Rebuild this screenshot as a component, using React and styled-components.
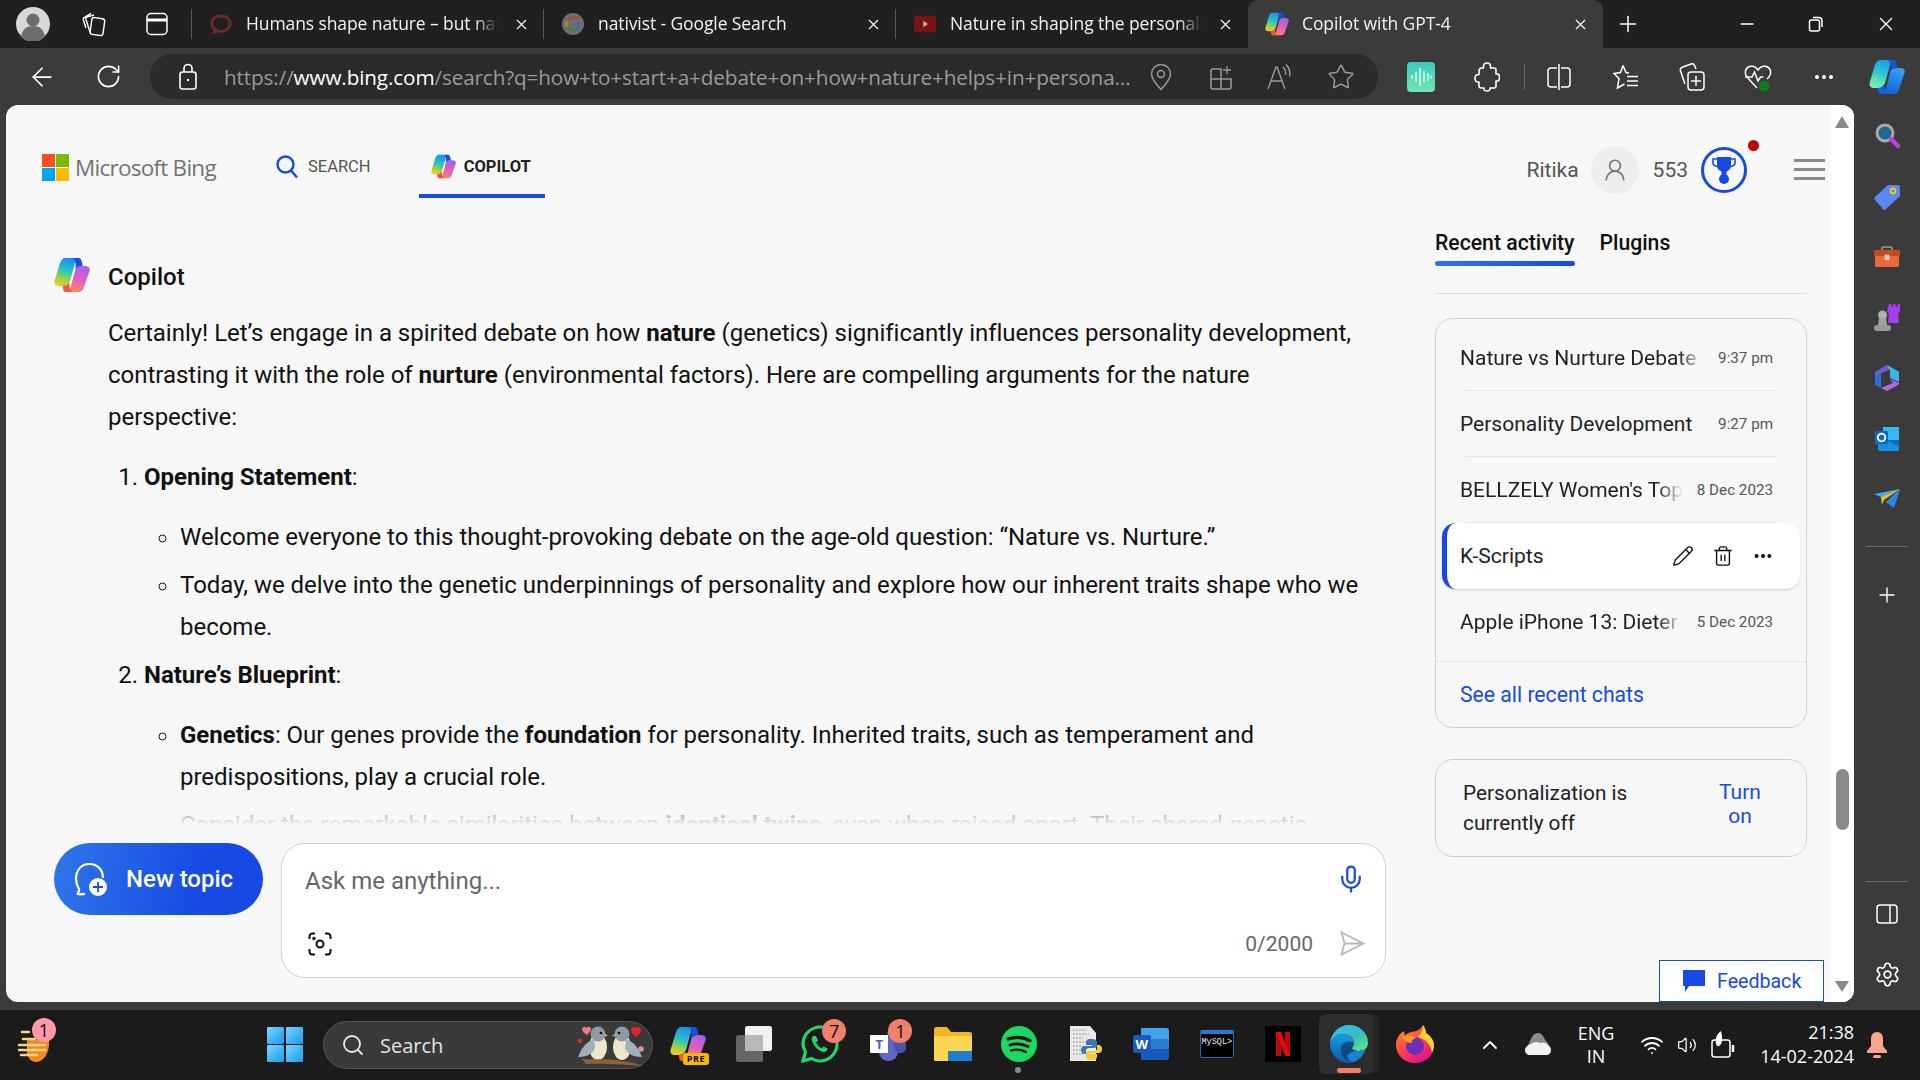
import React from "react";
import styled, { createGlobalStyle } from "styled-components";
import { ArrowLeft, RotateCw, X, Plus, Minus, Star, Ellipsis, Search, UserRound, Pencil, Trash2, Mic, Settings, ChevronUp, Volume2, Wifi } from "lucide-react";

const Global = createGlobalStyle`
  html, body { margin: 0; padding: 0; background: #3b3b3b; overflow: hidden; }
  * { box-sizing: border-box; }
`;

const Shell = styled.div`
  width: 1920px; height: 1080px; display: flex; flex-direction: column; overflow: hidden;
  font-family: "Open Sans", "Noto Sans", sans-serif; background: #3b3b3b;
`;

/* ---------- tab strip ---------- */
const TabBar = styled.div`height: 48px; background: #202020; display: flex; flex: none; color: #fff;`;
const TabTool = styled.div`
  width: ${p => p.$w}px; flex: none; display: flex; align-items: center; justify-content: center;
  ${p => p.$line && "border-right: 1px solid #5a5a5a; margin: 9px 0; height: 30px;"}
`;
const Tab = styled.div`
  width: ${p => p.$w || 352}px; flex: none; height: 48px; display: flex; align-items: center; padding-left: 18px; position: relative;
  background: ${p => p.$active ? "#3b3b3b" : "transparent"};
  border-radius: ${p => p.$active ? "10px 10px 0 0" : "0"};
  ${p => !p.$active && !p.$last && `&::after { content: ""; position: absolute; right: 0; top: 9px; height: 30px; width: 1px; background: #5a5a5a; }`}
`;
const TabIcon = styled.div`width: 22px; height: 24px; flex: none; margin-right: 14px; display: flex; align-items: center; justify-content: center;`;
const TabTitle = styled.div`
  flex: 1; min-width: 0; font-size: 17.5px; letter-spacing: -0.1px; white-space: nowrap; overflow: hidden; color: #f2f2f2; padding-bottom: 2px;
  -webkit-mask-image: linear-gradient(90deg, #000 calc(100% - 24px), transparent);
  mask-image: linear-gradient(90deg, #000 calc(100% - 24px), transparent);
`;
const TabClose = styled.div`width: 46px; flex: none; display: flex; align-items: center; justify-content: center;`;
const WindowButtons = styled.div`display: flex; flex: 1; align-items: center;`;
const WinButton = styled.div`
  width: ${p => p.$w}px; flex: none; display: flex; align-items: center; justify-content: center; height: 48px;
`;

/* ---------- toolbar ---------- */
const Toolbar = styled.div`height: 57px; flex: none; background: #3b3b3b; display: flex; align-items: flex-start; padding: 6px 0 0 12px; color: #fff;`;
const ToolSlot = styled.div`width: ${p => p.$w}px; height: 45px; flex: none; display: flex; align-items: center; justify-content: center;`;
const Address = styled.div`
  width: 1228px; height: 45px; flex: none; margin: 0 10px 0 6px; border-radius: 23px; background: #2b2b2b; display: flex; align-items: center; padding-right: 7px;
`;
const AddressSlot = styled.div`width: ${p => p.$w || 60}px; height: 45px; flex: none; display: flex; align-items: center; justify-content: center;`;
const Url = styled.div`flex: 1; min-width: 0; font-size: 20.7px; margin-left: -2px; white-space: nowrap; overflow: hidden; color: #9a9a9a; letter-spacing: -0.12px;
  b { font-weight: 400; color: #fff; }
`;
const ToolSep = styled.div`width: 1px; height: 26px; background: #6a6a6a; margin: 10px 0 0 4px; flex: none;`;

/* ---------- page ---------- */
const Middle = styled.div`height: 905px; flex: none; display: flex; padding: 0 0 8px 6px;`;
const Page = styled.div`width: 1848px; flex: none; display: flex; background: #f7f7f7; border-radius: 12px; overflow: hidden; font-family: Roboto, sans-serif; color: #111;`;
const Main = styled.div`width: 1824px; flex: none; display: flex; flex-direction: column; position: relative;`;
const Header = styled.header`height: 93px; flex: none; display: flex; align-items: flex-end; padding-left: 36px;`;
const Brand = styled.div`display: flex; align-items: center; gap: 6px; margin-bottom: 15px;`;
const BrandMark = styled.div`display: grid; grid-template-columns: 13px 13px; grid-template-rows: 13px 13px; gap: 1px;`;
const BrandTile = styled.i`display: block; background: ${p => p.$c};`;
const BrandName = styled.div`font-family: "Open Sans", sans-serif; font-size: 22.5px; letter-spacing: -0.75px; color: #737373; font-weight: 500; width: 142px; white-space: nowrap;`;
const NavItem = styled.div`
  align-self: stretch; display: flex; align-items: center; gap: ${p => p.$active ? 8 : 10}px; padding: 34px ${p => p.$active ? 14 : 0}px 0 ${p => p.$active ? 12 : 0}px;
  margin-left: ${p => p.$ml}px; font-size: 16.5px; color: ${p => p.$active ? "#222" : "#555"}; font-weight: ${p => p.$active ? 700 : 400};
  border-bottom: 4px solid ${p => p.$active ? "#174ae4" : "transparent"};
`;
const Account = styled.div`margin-left: auto; display: flex; align-items: center; height: 48px; margin-bottom: 4px; padding-right: 5px; font-size: 21px; color: #555;`;
const Avatar = styled.div`width: 48px; height: 48px; border-radius: 50%; background: #eeeeee; margin: 0 14px 0 12px; display: flex; align-items: center; justify-content: center; color: #777;`;
const Trophy = styled.div`width: 46px; height: 46px; margin: 0 0 0 13px; position: relative;`;
const RedDot = styled.span`position: absolute; right: -12px; top: -7px; width: 11px; height: 11px; border-radius: 50%; background: #c40000;`;
const Burger = styled.div`width: 31px; margin: 0 0 2px 47px; display: flex; flex-direction: column; gap: 6px; i { display: block; height: 3px; background: #8a8a8a; }`;

const Body = styled.div`flex: 1; min-height: 0; display: flex; gap: 49px; padding-left: 48px;`;
const LeftCol = styled.div`width: 1332px; flex: none; display: flex; flex-direction: column;`;
const Chat = styled.div`height: 629px; flex: none; overflow: hidden; position: relative; padding: 60px 0 0;`;
const ChatFade = styled.div`position: absolute; left: 0; right: 0; bottom: 0; height: 42px; background: linear-gradient(rgba(247,247,247,0), #f7f7f7 96%);`;
const ChatHead = styled.div`display: flex; align-items: center; gap: 18px; height: 34px; font-size: 24px; font-weight: 500; span { padding-top: 3px; }`;
const Message = styled.div`
  padding: 20px 20px 0 54px; font-size: 24px; line-height: 42px; letter-spacing: -0.02px; color: #111;
  p { margin: 0 0 18px; }
  ol { margin: 0; padding-left: 36px; }
  ol > li { margin: 0 0 6px; }
  ul { margin: 18px 0 0; padding-left: 36px; list-style: circle; }
  ul > li { margin: 0 0 6px; }
  b { font-weight: 700; }
`;
const InputRow = styled.div`display: flex; gap: 18px; margin-top: 16px; align-items: flex-start;`;
const NewTopic = styled.div`
  width: 209px; height: 72px; flex: none; border-radius: 36px; background: linear-gradient(100deg, #2e77e9, #174ae4 70%);
  display: flex; align-items: center; gap: 18px; padding-left: 20px; color: #fff; font-size: 24px; font-weight: 500;
`;
const InputBox = styled.div`
  flex: 1; height: 135px; background: #fff; border: 1px solid #d2d2d2; border-radius: 24px; display: flex; flex-direction: column; justify-content: space-between; padding: 18px 20px 21px 23px;
`;
const InputLine = styled.div`display: flex; align-items: center; justify-content: space-between; padding-left: ${p => p.$inset || 0}px;`;
const Placeholder = styled.div`font-size: 24px; color: #666; padding-top: 5px;`;
const MicWrap = styled.div`display: flex; margin-right: -1px;`;
const Counter = styled.div`display: flex; align-items: center; gap: 27px; font-size: 21px; color: #666;`;

const RightCol = styled.div`width: 372px; flex: none; display: flex; flex-direction: column;`;
const SideTabs = styled.div`display: flex; gap: 25px; padding: 33px 0 27px; border-bottom: 1px solid #dcdcdc; height: 96px;`;
const SideTab = styled.div`
  height: 35px; font-size: 21.2px; font-weight: 500; line-height: 24px; color: #111; position: relative;
  ${p => p.$active && `&::after { content: ""; position: absolute; left: 0; right: 0; bottom: 0; height: 5px; border-radius: 3px; background: linear-gradient(90deg, #2e77e9, #174ae4); }`}
`;
const Recent = styled.div`margin-top: 24px; height: 410px; border: 1px solid #d2d2d2; border-radius: 18px; padding-top: 6px;`;
const Row = styled.div`
  height: 66px; margin: 0 6px; width: 358px; display: flex; align-items: center; padding: 0 27px 0 18px; position: relative;
  ${p => p.$active && `background: #fff; border-radius: 14px; border-left: 5px solid #174ae4; padding-left: 13px; box-shadow: 0 1px 2px rgba(0,0,0,.18);`}
  ${p => p.$rule && `&::after { content: ""; position: absolute; left: 24px; right: 24px; bottom: 0; height: 1px; background: #e6e6e6; }`}
`;
const RowTitle = styled.div`
  flex: 1; min-width: 0; margin-right: 14px; font-size: 21px; white-space: nowrap; overflow: hidden; color: #222;
  ${p => p.$fade && `-webkit-mask-image: linear-gradient(90deg, #000 calc(100% - 26px), transparent); mask-image: linear-gradient(90deg, #000 calc(100% - 26px), transparent);`}
`;
const RowTime = styled.div`flex: none; font-size: 15.2px; color: #555;`;
const RowActions = styled.div`display: flex; align-items: center; gap: 18px; color: #111; margin-right: -1px;`;
const RecentFoot = styled.div`margin-top: 6px; height: 66px; border-top: 1px solid #e6e6e6; display: flex; align-items: center; padding-left: 24px; font-size: 21.2px; color: #174ae4;`;
const Personal = styled.div`
  margin-top: 31px; height: 98px; border: 1px solid #d2d2d2; border-radius: 18px; display: flex; align-items: center; justify-content: space-between; padding: 0 41px 0 27px;
`;
const PersonalText = styled.div`width: 200px; font-size: 20.8px; line-height: 30px; color: #222;`;
const TurnOn = styled.div`width: 50px; font-size: 21px; line-height: 24px; color: #174ae4; text-align: center; margin-bottom: 8px;`;
const Feedback = styled.div`
  position: absolute; right: 6px; bottom: 0; width: 165px; height: 42px; background: #fff; border: 1px solid #174ae4; border-bottom-width: 1px;
  display: flex; align-items: center; gap: 12px; padding-left: 23px; color: #174ae4; font-size: 19.6px;
`;

const Scroll = styled.div`width: 24px; flex: none; background: #fff; display: flex; flex-direction: column; align-items: center; padding-top: 11px;`;
const ArrowUp = styled.i`display: block; width: 0; height: 0; border-left: 7px solid transparent; border-right: 7px solid transparent; border-bottom: 12px solid #8a8a8a;`;
const ArrowDown = styled.i`display: block; width: 0; height: 0; margin-top: 151px; border-left: 7px solid transparent; border-right: 7px solid transparent; border-top: 11px solid #8a8a8a;`;
const Thumb = styled.i`display: block; width: 13px; height: 61px; margin-top: 641px; border-radius: 7px; background: #8a8a8a;`;

/* ---------- edge sidebar ---------- */
const Sidebar = styled.aside`width: 66px; flex: none; display: flex; flex-direction: column; align-items: center; padding: 1px 0 3px; color: #fff;`;
const SideSlot = styled.div`height: ${p => p.$h || 60.5}px; flex: none; display: flex; align-items: center; justify-content: center; margin-top: ${p => p.$mt || 0}px;`;
const SideRule = styled.div`width: 42px; height: 1px; background: #6a6a6a; margin: ${p => p.$m};`;

/* ---------- taskbar ---------- */
const Taskbar = styled.div`height: 70px; flex: none; background: #1b1b1b; display: flex; align-items: center; padding-left: 12px; color: #fff;`;
const Widget = styled.div`width: 44px; height: 70px; flex: none; position: relative; display: flex; align-items: center; justify-content: center; padding-bottom: 3px;`;
const StartSlot = styled.div`width: 66px; margin-left: 196px; display: flex; justify-content: center; flex: none; padding-bottom: 1px;`;
const StartGrid = styled.div`display: grid; grid-template-columns: 17px 17px; grid-template-rows: 17px 17px; gap: 1.5px;`;
const StartTile = styled.i`display: block; background: linear-gradient(135deg, #7ad7ff, #159af0); border-radius: 1px;`;
const TaskSearch = styled.div`
  width: 330px; height: 48px; margin: 0 2px 0 5px; flex: none; border-radius: 24px; background: #3a3a3a; border: 1px solid #555; display: flex; align-items: center;
  padding-left: 17px; gap: 15px; font-size: 20px; color: #e4e4e4; position: relative;
`;
const Birds = styled.div`margin-left: auto; margin-right: 6px; display: flex; align-items: center;`;
const TaskSlot = styled.div`width: 66.1px; height: 70px; padding-bottom: 3px; flex: none; display: flex; align-items: center; justify-content: center; position: relative;`;
const Badge = styled.span`
  position: absolute; top: ${p => p.$top || 9}px; left: ${p => p.$left}px; width: 24px; height: 24px; border-radius: 50%; background: ${p => p.$c || "#f0806a"};
  color: #111; font: 400 18px/24px "Open Sans", sans-serif; text-align: center;
`;
const TaskDot = styled.i`position: absolute; left: 30px; bottom: 7px; width: 6px; height: 6px; border-radius: 50%; background: #8a8a8a;`;
const ActiveFrame = styled.div`
  position: absolute; left: 3px; right: 8px; top: 4px; bottom: 6px; background: #2d2d2d; border-radius: 7px; box-shadow: 6px 0 0 -1px #262626;
`;
const ActiveBar = styled.i`position: absolute; left: 21px; bottom: 7px; width: 24px; height: 5px; border-radius: 3px; background: #f0806a;`;
const TaskIcon = styled.div`position: relative; display: flex; margin-left: ${p => p.$ml || 0}px;`;
const PreTag = styled.span`
  position: absolute; right: -3px; bottom: -3px; height: 12px; width: 26px; border-radius: 3px; background: #f8b800; color: #111; font: 700 9px/12px "Open Sans", sans-serif; text-align: center; letter-spacing: .6px;
`;
const Tray = styled.div`display: flex; align-items: center; margin-left: 21px; flex: none;`;
const TrayItem = styled.div`width: ${p => p.$w}px; flex: none; display: flex; align-items: center; justify-content: center;`;
const Lang = styled.div`width: 62px; flex: none; text-align: center; font-size: 18px; line-height: 23px;`;
const Clock = styled.div`width: 105px; flex: none; text-align: right; font-size: 18px; line-height: 24px; margin-top: -2px;`;

/* ---------- drawings ---------- */
const CopilotLogo = ({ size = 36, id = "cp", cool }) => (
  <svg width={size} height={size} viewBox="0 0 36 36" style={{ flex: "none" }}>
    <defs>
      <linearGradient id={id + "a"} x1="0.6" y1="0" x2="0.3" y2="1">
        <stop offset="0" stopColor={cool ? "#1b9de8" : "#1c8bf0"} />
        <stop offset=".45" stopColor={cool ? "#2cc4d8" : "#26c3c8"} />
        <stop offset=".72" stopColor={cool ? "#5be0b0" : "#8fd14a"} />
        <stop offset="1" stopColor={cool ? "#7fe8c0" : "#f6c928"} />
      </linearGradient>
      <linearGradient id={id + "b"} x1="0.7" y1="0" x2="0.3" y2="1">
        <stop offset="0" stopColor={cool ? "#3aa0f0" : "#a35ff0"} />
        <stop offset=".5" stopColor={cool ? "#1f83e8" : "#e45fc0"} />
        <stop offset="1" stopColor={cool ? "#1560d8" : "#ff8a50"} />
      </linearGradient>
    </defs>
    <path d="M11 1H25C22 2 21.500 4 20.500 8L16 24C15 27 12 29 9 29H5C2 29 0 27 .5 24L6 6C7 3 9 1 11 1Z" fill={`url(#${id}a)`} />
    <path d="M28 9H31C34.500 9 36.500 11 35.500 14L30 30C29 33.500 27 35 24 35H11C14 34.500 16 32 17 29L21.500 12C22.500 10 25 9 28 9Z" fill={`url(#${id}b)`} />
    <path d="M19 1H25C27 1 28 4 28.500 9C25 9 23 10 21.500 12C22 7 21.500 3 19 1Z" fill={cool ? "#1456c8" : "#1c4fd8"} />
    <path d="M9 29C11 29 14 28 15.500 25C15 30 16 33 19 35H11C9.500 34 8.500 32 9 29Z" fill={cool ? "#1560d8" : "#f0573c"} />
  </svg>
);

const Profile = () => (
  <svg width="34" height="34" viewBox="0 0 34 34"><circle cx="17" cy="17" r="17" fill="#d9d8d4" /><circle cx="17" cy="13" r="6.500" fill="#6d6d6d" /><path d="M5 30c1-8 6-11 12-11s11 3 12 11a17 17 0 0 1-24 0Z" fill="#6d6d6d" /></svg>
);
const Workspaces = () => (
  <svg width="26" height="26" viewBox="0 0 26 26" fill="none" stroke="#fff" strokeWidth="1.400"><rect x="10" y="7" width="13" height="17" rx="2.500" transform="rotate(8 16 15)" /><path d="M9 21 5 8.500C4.600 7 5.400 6 6.600 5.700L13 4M5 17 2.400 9C2 7.600 2.800 6.600 4 6.200L10 2.400" /></svg>
);
const VerticalTabs = () => (
  <svg width="22" height="24" viewBox="0 0 22 24" fill="none" stroke="#fff" strokeWidth="1.500"><rect x="1" y="1.500" width="20" height="21" rx="4" /><path d="M1 8h20" strokeWidth="3" /></svg>
);
const BubbleFav = () => (
  <svg width="24" height="22" viewBox="0 0 24 22" fill="none"><path d="M5 19.500 6.500 17C3.500 15.500 2 13 2 10.500 2 5.500 6.500 2 12 2s10 3.500 10 8.500S17.500 19 12 19c-1.500 0-2.500-.1-3.500-.4Z" stroke="#6e2a2a" strokeWidth="3" /></svg>
);
const GoogleFav = () => (
  <svg width="24" height="24" viewBox="0 0 24 24" fill="none"><circle cx="12" cy="12" r="12" fill="#6f6f6f" /><path d="M17 7.400A7 7 0 0 0 6 8.500" stroke="#a8473e" strokeWidth="2.800" /><path d="M6 8.500a7 7 0 0 0 0 7" stroke="#a78a2e" strokeWidth="2.800" /><path d="M6 15.500a7 7 0 0 0 10.500 1.800" stroke="#3f7c4d" strokeWidth="2.800" /><path d="M16.500 17.300c1.600-1.400 2.400-3.300 2.100-5.300H12" stroke="#4468a8" strokeWidth="2.800" /></svg>
);
const TubeFav = () => (
  <svg width="24" height="24" viewBox="0 0 24 24"><rect x="0" y="3" width="24" height="18" rx="4" fill="#7a1414" /><path d="M10 8.500v7l5.500-3.500Z" fill="#c9a0a0" /></svg>
);
const Lock = () => (
  <svg width="20" height="28" viewBox="0 0 20 28" fill="none" stroke="#fff" strokeWidth="1.600"><rect x="2" y="9" width="16" height="17" rx="2.500" /><path d="M6 9V5.500a4 4 0 0 1 8 0V9" /><circle cx="10" cy="17" r="1.200" fill="#fff" stroke="none" /></svg>
);
const PinIcon = () => (
  <svg width="24" height="28" viewBox="0 0 24 28" fill="none" stroke="#9a9a9a" strokeWidth="1.500"><path d="M12 26.500C6 20 2.500 15.500 2.500 11a9.500 9.500 0 0 1 19 0c0 4.500-3.500 9-9.500 15.500Z" /><circle cx="12" cy="11" r="3.500" /></svg>
);
const AppsIcon = () => (
  <svg width="24" height="26" viewBox="0 0 24 26" fill="none" stroke="#9a9a9a" strokeWidth="1.500"><path d="M2 7a2 2 0 0 1 2-2h8v10H2ZM2 15h10v10H4a2 2 0 0 1-2-2ZM12 15h10v8a2 2 0 0 1-2 2h-8Z" /><path d="M18 2v8M14 6h8" strokeWidth="1.300" /></svg>
);
const ReadIcon = () => (
  <svg width="30" height="28" viewBox="0 0 30 28" fill="none" stroke="#9a9a9a" strokeWidth="1.400"><path d="M2 26 10 4h1l8 22M5 18h11" /><path d="M17 4c2 2 3 5 2.500 8M20 1.500c3 3 4.500 7 3.800 12" /></svg>
);
const VoiceApp = () => (
  <svg width="28" height="30" viewBox="0 0 28 30"><defs><linearGradient id="va" x1="0" y1="0" x2="0" y2="1"><stop offset="0" stopColor="#3fc6c2" /><stop offset="1" stopColor="#6fe6b4" /></linearGradient></defs><rect width="28" height="30" rx="4" fill="url(#va)" /><path d="M5 13v4M9 10v10M13 6v18M17 9v12M21 11v8M24 13.500v3" stroke="#e8fff8" strokeWidth="1.300" /></svg>
);
const PuzzleIcon = () => (
  <svg width="26" height="30" viewBox="0 0 26 30" fill="none" stroke="#fff" strokeWidth="1.600" strokeLinejoin="round"><path d="M8 6h1.500C9 2 11 1 13 1s4 1 3.500 5H20a2 2 0 0 1 2 2v4c3-.5 3.500 1.500 3.500 3.500S25 19.500 22 19v5a2 2 0 0 1-2 2h-4c.5 2-1 3-3 3s-3.500-1-3-3H7a2 2 0 0 1-2-2v-4c-3 .5-4-1.500-4-3.500S2 12 5 12.500V9a3 3 0 0 1 3-3Z" /></svg>
);
const SplitIcon = () => (
  <svg width="26" height="28" viewBox="0 0 26 28" fill="none" stroke="#fff" strokeWidth="1.500"><rect x="2" y="5" width="22" height="19" rx="3" /><path d="M13 1v26" stroke="#3b3b3b" strokeWidth="4" /><path d="M13 1v26" /></svg>
);
const FavListIcon = () => (
  <svg width="28" height="28" viewBox="0 0 28 28" fill="none" stroke="#fff" strokeWidth="1.500"><path d="M11 2.500 14 9.500 17 10M11 2.500 8.500 9.500 2 10.500l5 5-1.500 9.500 7-4" /><path d="M15 13.500h11M15 18h11M15 22.500h11" /></svg>
);
const CollectIcon = () => (
  <svg width="28" height="30" viewBox="0 0 28 30" fill="none" stroke="#fff" strokeWidth="1.500"><rect x="10" y="10" width="16" height="18" rx="3" /><path d="M18 14v10M13 19h10" /><path d="M7 22 2.500 9c-.6-2 .2-3.200 1.800-3.800L13 2c1.800-.6 3 .2 3.600 1.600L18 7" /></svg>
);
const HealthIcon = () => (
  <svg width="30" height="30" viewBox="0 0 30 30" fill="none"><path d="M14 26 4 15C1 11.500 2 6 6.500 4.500 10 3.500 13 5 15 8c2-3 5-4.500 8.500-3.500C28 6 29 11.500 26 15l-2 2" stroke="#fff" strokeWidth="1.500" /><path d="M2 15h7l2.500-5 3.500 9 2.500-4h3" stroke="#fff" strokeWidth="1.500" /><circle cx="21" cy="24" r="5.500" fill="#0d7a1c" /></svg>
);
const BingMag = () => (
  <svg width="22" height="24" viewBox="0 0 22 24" fill="none" stroke="#174ae4" strokeWidth="2.400"><circle cx="9.500" cy="9.500" r="8" /><path d="m15 15.500 6 7" /></svg>
);
const TrophyIcon = () => (
  <svg width="46" height="46" viewBox="0 0 46 46" fill="none"><circle cx="23" cy="23" r="21.500" stroke="#174ae4" strokeWidth="3" /><path d="M16 10h14v9c0 2.500-2.500 5-4.500 5.500V28h-5v-3.500C18.500 24 16 21.500 16 19Z" fill="#174ae4" /><path d="M16 12h-4v4c0 2 2 3 4 3.500M30 12h4v4c0 2-2 3-4 3.500" stroke="#174ae4" strokeWidth="1.600" /><circle cx="23" cy="32" r="5" fill="#174ae4" /></svg>
);
const NewTopicIcon = () => (
  <svg width="34" height="34" viewBox="0 0 34 34" fill="none"><path d="M3 32c2-2 2.500-3 2-5C3.500 24.500 2 21.500 2 17 2 8 7.500 2 15.500 2S29 8 29 16" stroke="#fff" strokeWidth="2.200" /><path d="M3 32c3 .5 6 .5 8-.5" stroke="#fff" strokeWidth="2.200" /><circle cx="24" cy="25" r="9" fill="#fff" /><path d="M24 20v10M19 25h10" stroke="#174ae4" strokeWidth="1.800" /></svg>
);
const CameraScan = () => (
  <svg width="24" height="24" viewBox="0 0 24 24" fill="none" stroke="#111" strokeWidth="2"><path d="M7 1.500H4A3 3 0 0 0 1.500 4v3M17 1.500h3A3 3 0 0 1 22.500 4v3M1.500 17v3A3 3 0 0 0 4 22.500h3M22.500 17v3a3 3 0 0 1-2.500 2.500h-3" /><circle cx="12" cy="12" r="3.500" /><circle cx="6" cy="6.500" r=".8" fill="#111" /></svg>
);
const SendIcon = () => (
  <svg width="25" height="25" viewBox="0 0 25 25" fill="none" stroke="#b8b8b8" strokeWidth="1.800"><path d="M1.500 1.500 23.500 12.500 1.500 23.500 4.500 12.500ZM4.500 12.500h19" /></svg>
);
const ChatGlyph = () => (
  <svg width="22" height="22" viewBox="0 0 22 22"><path d="M0 0h22v16H6l-4 6v-6H0Z" fill="#174ae4" /></svg>
);
const PanelIcon = () => (
  <svg width="22" height="20" viewBox="0 0 22 20" fill="none" stroke="#fff" strokeWidth="1.500"><rect x="1" y="1" width="20" height="18" rx="3" /><path d="M14 1v18" /></svg>
);

/* sidebar apps */
const SideMag = () => (
  <svg width="26" height="28" viewBox="0 0 26 28"><circle cx="11" cy="11" r="8" fill="#1e6896" stroke="#a8a8a8" strokeWidth="3" /><path d="m17 17 7 7" stroke="#c43de0" strokeWidth="4.500" strokeLinecap="round" /></svg>
);
const SideTag = () => (
  <svg width="26" height="26" viewBox="0 0 26 26"><path d="M14 1h10a2 2 0 0 1 2 2v9L12 25a2 2 0 0 1-3 0L1 16a2 2 0 0 1 0-3Z" fill="#5a87f0" /><circle cx="19" cy="7" r="2.500" fill="none" stroke="#f5c518" strokeWidth="1.800" /></svg>
);
const SideBox = () => (
  <svg width="28" height="22" viewBox="0 0 28 22"><path d="M9 5V2.500A1.500 1.500 0 0 1 10.500 1h7A1.500 1.500 0 0 1 19 2.500V5" fill="none" stroke="#9a9a9a" strokeWidth="1.600" /><rect x="1" y="4" width="26" height="7" rx="1" fill="#c44a1e" /><rect x="2" y="10" width="24" height="11" rx="1.500" fill="#e86a3a" /><rect x="11.500" y="8.500" width="5" height="5.500" rx="1" fill="#ccc" /></svg>
);
const SideChess = () => (
  <svg width="28" height="29" viewBox="0 0 28 29"><path d="M16 1h2.500v2.500h1.700V1h2.600v2.500h1.700V1H27v7l-2 3 1 9H15l1-9-2-3Z" fill="#a63bf0" /><circle cx="9.500" cy="12" r="4.500" fill="#b0b0b0" /><path d="M6 15h7l1 7H5Z" fill="#a2a2a2" /><rect x="1" y="22" width="17" height="6" rx="3" fill="#9a9a9a" /></svg>
);
const SideOffice = () => (
  <svg width="26" height="28" viewBox="0 0 26 28"><path d="M13 1 2 7a2 2 0 0 0-1 1.700v10.600c0 .7.400 1.300 1 1.700l5 3V9l11-4Z" fill="#6a5bd8" /><path d="M13 1l11 6c.7.400 1 1 1 1.700V18l-9-4V6Z" fill="#3fb0ee" /><path d="M25 18v1.300c0 .7-.4 1.300-1 1.700l-11 6-6-3 12-5-3-4 9 4Z" fill="#b06ae0" /><path d="M7 9v15l-5-3c-.6-.4-1-1-1-1.700V12Z" fill="#2a6fd8" /></svg>
);
const SideOutlook = () => (
  <svg width="24" height="24" viewBox="0 0 24 24"><rect x="8" y="0" width="16" height="13" fill="#35b8f0" /><path d="M3 14h21v10H5a2 2 0 0 1-2-2Z" fill="#1490df" /><path d="m12 13 12 7v-7Z" fill="#0f6cbd" /><rect x="0" y="4" width="13" height="13" rx="1" fill="#0f6cbd" /><circle cx="6.500" cy="10.500" r="3.800" fill="none" stroke="#fff" strokeWidth="1.800" /></svg>
);
const SidePlane = () => (
  <svg width="26" height="20" viewBox="0 0 26 20"><path d="M0 5 26 0 9 9Z" fill="#3bb0f0" /><path d="M26 0 20 19 12 13Z" fill="#2a8ae8" /><path d="M26 0 7 8l1 8 2-5Z" fill="#f4b81a" /></svg>
);

/* taskbar apps */
const FlagWidget = () => (
  <svg width="34" height="38" viewBox="0 0 34 38"><path d="M10 15h22c1 12-5 22-13 22-5 0-8-4-9-9Z" fill="#ef8a1c" /><path d="M5 7h7M6 14h12M2 20h26M2 25h26M4 30h16" stroke="#f5d48a" strokeWidth="2.600" strokeLinecap="round" /></svg>
);
const Bird = ({ x, flip }) => (
  <g transform={`translate(${x} 0) ${flip ? "scale(-1 1)" : ""}`}>
    <ellipse cx="0" cy="24" rx="9" ry="13" fill="#efe8c8" />
    <circle cx="0" cy="11" r="7.500" fill="#8d9ba6" />
    <path d="M4 16C14 20 17 27 20 34 10 34 4 30 3 24Z" fill="#9fb0bd" />
    <circle cx="-3" cy="10" r="1.300" fill="#111" />
    <path d="M-7 11l-3 1.500 3 1Z" fill="#e8b040" />
  </g>
);
const BirdsIcon = () => (
  <svg width="70" height="44" viewBox="0 0 70 44">
    <Bird x={22} flip /><Bird x={46} />
    <path d="M6 36C20 37 40 34 68 43 50 42 28 40 10 41Z" fill="#8a6238" />
    <path d="M14 3c-2-2-5-1-5 2 0 2 3 4 5 6 2-2 5-4 5-6 0-3-3-4-5-2Z" fill="#f08080" transform="translate(-2 2) scale(.9)" />
    <path d="M60 5c-2-2-5-1-5 2 0 3 3 5 5 7 2-2 5-4 5-7 0-3-3-4-5-2Z" fill="#e02828" />
    <circle cx="4" cy="18" r="2.200" fill="#e02828" /><circle cx="65" cy="26" r="2.800" fill="#f09090" />
  </svg>
);
const WindowsStack = () => (
  <svg width="36" height="36" viewBox="0 0 36 36"><rect x="9" y="0" width="27" height="25" rx="2.500" fill="#f1f1f1" /><rect x="0" y="9" width="27" height="27" rx="2.500" fill="#6a6a6a" opacity=".95" /><rect x="9" y="9" width="18" height="16" fill="#b8b8b8" /></svg>
);
const WhatsApp = () => (
  <svg width="38" height="38" viewBox="0 0 38 38" fill="none"><path d="M2 36 4.500 27C3 24.500 2 22 2 19 2 10 9.500 2 19 2s17 8 17 17-7.500 17-17 17c-3 0-6-1-8.500-2.500Z" stroke="#25d366" strokeWidth="3.200" /><path d="M12 11c-2 2-1.500 5 1 9s6 6.500 9.500 7c2.500 0 4-1.500 4-3.500l-4-2-2 2c-2-1-4.500-3.500-5.500-6l2-2-2-4.500Z" fill="#25d366" /></svg>
);
const Teams = () => (
  <svg width="28" height="34" viewBox="0 0 28 34"><circle cx="14" cy="6" r="5.500" fill="#7b83eb" /><rect x="0" y="10" width="19" height="24" rx="9" fill="#5f67c9" /><rect x="15" y="12" width="12" height="14" rx="5" fill="#4e55a8" /></svg>
);
const Explorer = () => (
  <svg width="38" height="34" viewBox="0 0 38 34"><path d="M0 2a2 2 0 0 1 2-2h11l4 5h19a2 2 0 0 1 2 2v25a2 2 0 0 1-2 2H2a2 2 0 0 1-2-2Z" fill="#f2b71e" /><path d="M0 9h38v23a2 2 0 0 1-2 2H2a2 2 0 0 1-2-2Z" fill="#fcd652" /><rect x="14" y="24" width="24" height="10" fill="#1d7fd2" /></svg>
);
const Spotify = () => (
  <svg width="36" height="36" viewBox="0 0 36 36" fill="none"><circle cx="18" cy="18" r="18" fill="#1ed760" /><path d="M7 13c7-2.500 15-2 22 1.500" stroke="#111" strokeWidth="3.200" strokeLinecap="round" /><path d="M9 19c6-2 12-1.500 18 1.500" stroke="#111" strokeWidth="2.700" strokeLinecap="round" /><path d="M10 24.500c5-1.500 10-1 15 1.500" stroke="#111" strokeWidth="2.200" strokeLinecap="round" /></svg>
);
const PyFile = () => (
  <svg width="34" height="36" viewBox="0 0 34 36"><path d="M1 0h20l6 7v28H1Z" fill="#e8e8e8" /><path d="M4 4h13M4 8h16M4 12h10M4 16h14M4 20h9M4 24h12M4 28h10" stroke="#9a9a9a" strokeWidth="1" strokeDasharray="2 1" /><path d="M22 13c-4 0-5 1.500-5 4v2h6v1h-8c-2 0-3 2-3 4s1 4 3 4h2v-3c0-2 1-3 4-3h4c2 0 3-1 3-3v-3c0-2-2-3-6-3Z" fill="#3a76b0" /><path d="M23 34c4 0 5-1.500 5-4v-2h-6v-1h8c2 0 3-2 3-4s-1-4-3-4h-2v3c0 2-1 3-4 3h-4c-2 0-3 1-3 3v3c0 2 2 3 6 3Z" fill="#f5c93a" /></svg>
);
const WordIcon = styled.div`
  width: 36px; height: 32px; position: relative; border-radius: 3px;
  background: linear-gradient(#41a5ee 0 33%, #2b7cd3 33% 66%, #185abd 66%);
  &::before { content: ""; position: absolute; left: -1px; top: 0; width: 9px; height: 100%; background: #1b1b1b; }
`;
const WordBadge = styled.span`position: absolute; left: 0; top: 7px; width: 18px; height: 18px; background: #185abd; color: #fff; border-radius: 2px; font: 700 13px/18px "Open Sans", sans-serif; text-align: center;`;
const TeamsBadge = styled.span`position: absolute; left: -9px; top: 8px; width: 18px; height: 18px; background: #fff; color: #5059c9; font: 700 13px/18px "Open Sans", sans-serif; text-align: center;`;
const MySql = styled.div`
  width: 34px; height: 28px; border: 1px solid #2a62b8; border-top: 4px solid #2a78d8; border-radius: 2px; background: #000; color: #eee; font: 400 8.500px/17px "Liberation Mono", monospace; text-align: center; white-space: nowrap; overflow: hidden;
`;
const Netflix = () => (
  <svg width="36" height="36" viewBox="0 0 36 36"><rect width="36" height="36" fill="#000" /><rect x="11" y="6" width="5" height="24" fill="#b9090b" /><rect x="20" y="6" width="5" height="24" fill="#b9090b" /><polygon points="11,6 16,6 25,30 20,30" fill="#e50914" /></svg>
);
const EdgeIcon = () => (
  <svg width="38" height="38" viewBox="0 0 38 38">
    <defs>
      <linearGradient id="ed1" x1="0" y1="0" x2="1" y2="1"><stop offset="0" stopColor="#35c1f1" /><stop offset=".55" stopColor="#34bcc6" /><stop offset="1" stopColor="#66eb6e" /></linearGradient>
      <linearGradient id="ed2" x1="0" y1="0" x2="0" y2="1"><stop offset="0" stopColor="#1b9de2" /><stop offset="1" stopColor="#0c59a4" /></linearGradient>
    </defs>
    <path d="M19 0C29 0 38 7 38 18c0 5-4 8-9 8-4 0-7-1-7-3 0-1 2-2 2-5 0-5-5-9-11-9C7 9 2 13 0 18 1 8 9 0 19 0Z" fill="url(#ed1)" />
    <path d="M0 18C2 13 7 9 13 9c6 0 11 4 11 9-6-3-13 0-13 7 0 6 5 11 12 12-2 .6-3 1-5 1C8 38 0 29 0 18Z" fill="url(#ed2)" />
    <path d="M11 25c0-7 7-10 13-7 0 3-2 4-2 5 0 2 3 3 7 3 3 0 5-1 7-2-3 8-10 14-13 13-7-1-12-6-12-12Z" fill="#114a8b" />
    <path d="M36 24c-2 1-4 2-7 2-6 0-10 2-12 5 2 4 4 6 6 6 5-1 10-6 13-13Z" fill="#1b82d2" />
  </svg>
);
const Firefox = () => (
  <svg width="38" height="38" viewBox="0 0 38 38">
    <defs><linearGradient id="ff" x1="0" y1="0" x2="0.6" y2="1"><stop offset="0" stopColor="#ff9a1f" /><stop offset=".6" stopColor="#ff3f4f" /><stop offset="1" stopColor="#e31587" /></linearGradient></defs>
    <path d="M19 38C8 38 0 30 0 20 0 13 4 8 8 6l1 5c2-3 5-4 7-4 6-1 10-4 11-7 2 3 3 6 3 8 5 3 8 8 8 12 0 10-8 18-19 18Z" fill="url(#ff)" />
    <path d="M27 0c2 3 3 6 3 8 5 3 8 8 8 12 0 3-1 6-2 8-1-8-6-14-14-16 3-3 5-7 5-12Z" fill="#ffcf2e" />
    <circle cx="19" cy="21" r="9" fill="#6e2fb8" />
    <path d="M6 12c4-2 10-2 14 1-3 1-5 3-4 5-3 0-7-1-10-6Z" fill="#ff9a1f" />
  </svg>
);
const CloudIcon = () => (
  <svg width="26" height="26" viewBox="0 0 26 26"><path d="M13 1c3 0 5 2 6 5l5 7v0H3l4-8c1-2 3-4 6-4Z" fill="#8a8a8a" /><path d="M6 12c2-2 6-3 9-1 2-1 6-1 8 2 2 1 3 3 3 5 0 3-2 5-5 5H5c-3 0-5-2-5-5s3-5 6-6Z" fill="#f2f2f2" /></svg>
);
const Battery = () => (
  <svg width="26" height="30" viewBox="0 0 26 30" fill="none" stroke="#fff" strokeWidth="1.500"><rect x="2" y="10" width="18" height="17" rx="2.500" /><path d="M23 15v7" strokeWidth="2.500" /><path d="M11 1c-4 3-6 7-5 13 1 3 3 3 5 0 2-4 1-9 0-13Z" fill="#fff" stroke="none" /></svg>
);
const BellIcon = () => (
  <svg width="22" height="28" viewBox="0 0 22 28"><path d="M11 1c-4 0-6 3-6 7v7l-4 5v2h20v-2l-4-5V8c0-4-2-7-6-7Z" fill="#f7a58c" /><rect x="7" y="24" width="8" height="3" rx="1.500" fill="#f7a58c" /></svg>
);

const recent = [
  { t: "Nature vs Nurture Debate", d: "9:37 pm", rule: true, fade: true },
  { t: "Personality Development", d: "9:27 pm", rule: true },
  { t: "BELLZELY Women's Tops Casual", d: "8 Dec 2023", rule: true, fade: true },
  { t: "K-Scripts", active: true },
  { t: "Apple iPhone 13: Dieter Bohn review", d: "5 Dec 2023", fade: true },
];

export default function App() {
  return (
    <Shell>
      <Global />
      <TabBar>
        <TabTool $w={66}><Profile /></TabTool>
        <TabTool $w={56}><Workspaces /></TabTool>
        <TabTool $w={70} $line><VerticalTabs /></TabTool>
        <Tab><TabIcon><BubbleFav /></TabIcon><TabTitle>Humans shape nature – but nature shapes us</TabTitle><TabClose><X size={17} strokeWidth={1.6} /></TabClose></Tab>
        <Tab><TabIcon><GoogleFav /></TabIcon><TabTitle>nativist - Google Search</TabTitle><TabClose><X size={17} strokeWidth={1.6} /></TabClose></Tab>
        <Tab $last><TabIcon><TubeFav /></TabIcon><TabTitle>Nature in shaping the personality of a child</TabTitle><TabClose><X size={17} strokeWidth={1.6} /></TabClose></Tab>
        <Tab $active $w={355}><TabIcon><CopilotLogo size={24} id="tabcp" /></TabIcon><TabTitle>Copilot with GPT-4</TabTitle><TabClose><X size={17} strokeWidth={1.6} /></TabClose></Tab>
        <WindowButtons>
          <WinButton $w={50}><Plus size={26} strokeWidth={1.4} /></WinButton>
          <WinButton $w={70} />
          <WinButton $w={48}><Minus size={20} strokeWidth={1.7} /></WinButton>
          <WinButton $w={90}><svg width="16" height="16" viewBox="0 0 16 16" fill="none" stroke="#fff" strokeWidth="1.500"><rect x="1.500" y="4" width="10" height="11" rx="2" /><path d="M5 1.500h6a3 3 0 0 1 3 3V11" /></svg></WinButton>
          <WinButton $w={50}><X size={22} strokeWidth={1.5} /></WinButton>
        </WindowButtons>
      </TabBar>

      <Toolbar>
        <ToolSlot $w={60}><ArrowLeft size={30} strokeWidth={1.4} /></ToolSlot>
        <ToolSlot $w={72}><RotateCw size={27} strokeWidth={1.4} /></ToolSlot>
        <Address>
          <AddressSlot $w={76}><Lock /></AddressSlot>
          <Url>https://<b>www.bing.com</b>/search?q=how+to+start+a+debate+on+how+nature+helps+in+persona...</Url>
          <AddressSlot><PinIcon /></AddressSlot>
          <AddressSlot><AppsIcon /></AddressSlot>
          <AddressSlot><ReadIcon /></AddressSlot>
          <AddressSlot><Star size={28} strokeWidth={1.3} color="#9a9a9a" /></AddressSlot>
        </Address>
        <ToolSlot $w={66}><VoiceApp /></ToolSlot>
        <ToolSlot $w={66}><PuzzleIcon /></ToolSlot>
        <ToolSep />
        <ToolSlot $w={68}><SplitIcon /></ToolSlot>
        <ToolSlot $w={66}><FavListIcon /></ToolSlot>
        <ToolSlot $w={66}><CollectIcon /></ToolSlot>
        <ToolSlot $w={65}><HealthIcon /></ToolSlot>
        <ToolSlot $w={68}><Ellipsis size={24} strokeWidth={2} /></ToolSlot>
        <ToolSlot $w={58}><CopilotLogo size={36} id="barcp" cool /></ToolSlot>
      </Toolbar>

      <Middle>
        <Page>
          <Main>
            <Header>
              <Brand>
                <BrandMark>
                  <BrandTile $c="#f25022" /><BrandTile $c="#7fba00" /><BrandTile $c="#00a4ef" /><BrandTile $c="#ffb900" />
                </BrandMark>
                <BrandName>Microsoft Bing</BrandName>
              </Brand>
              <NavItem $ml={59}><BingMag /><span>SEARCH</span></NavItem>
              <NavItem $ml={48} $active><CopilotLogo size={25} id="navcp" /><span>COPILOT</span></NavItem>
              <Account>
                Ritika
                <Avatar><UserRound size={26} strokeWidth={1.6} /></Avatar>
                553
                <Trophy><TrophyIcon /><RedDot /></Trophy>
                <Burger><i /><i /><i /></Burger>
              </Account>
            </Header>
            <Body>
              <LeftCol>
                <Chat>
                  <ChatHead><CopilotLogo id="chatcp" /><span>Copilot</span></ChatHead>
                  <Message>
                    <p>Certainly! Let’s engage in a spirited debate on how <b>nature</b> (genetics) significantly influences personality development, contrasting it with the role of <b>nurture</b> (environmental factors). Here are compelling arguments for the nature perspective:</p>
                    <ol>
                      <li><b>Opening Statement</b>:
                        <ul>
                          <li>Welcome everyone to this thought-provoking debate on the age-old question: “Nature vs. Nurture.”</li>
                          <li>Today, we delve into the genetic underpinnings of personality and explore how our inherent traits shape who we become.</li>
                        </ul>
                      </li>
                      <li><b>Nature’s Blueprint</b>:
                        <ul>
                          <li><b>Genetics</b>: Our genes provide the <b>foundation</b> for personality. Inherited traits, such as temperament and predispositions, play a crucial role.</li>
                          <li>Consider the remarkable similarities between <b>identical twins</b>, even when raised apart. Their shared genetic</li>
                        </ul>
                      </li>
                    </ol>
                  </Message>
                  <ChatFade />
                </Chat>
                <InputRow>
                  <NewTopic><NewTopicIcon /><span>New topic</span></NewTopic>
                  <InputBox>
                    <InputLine><Placeholder>Ask me anything...</Placeholder><MicWrap><Mic size={30} strokeWidth={1.8} color="#174ae4" /></MicWrap></InputLine>
                    <InputLine $inset={3}><CameraScan /><Counter>0/2000<SendIcon /></Counter></InputLine>
                  </InputBox>
                </InputRow>
              </LeftCol>
              <RightCol>
                <SideTabs>
                  <SideTab $active>Recent activity</SideTab>
                  <SideTab>Plugins</SideTab>
                </SideTabs>
                <Recent>
                  {recent.map(r => (
                    <Row key={r.t} $active={r.active} $rule={r.rule}>
                      <RowTitle $fade={r.fade}>{r.t}</RowTitle>
                      {r.active ? (
                        <RowActions>
                          <Pencil size={22} strokeWidth={1.5} />
                          <Trash2 size={22} strokeWidth={1.5} />
                          <Ellipsis size={22} strokeWidth={2.4} />
                        </RowActions>
                      ) : <RowTime>{r.d}</RowTime>}
                    </Row>
                  ))}
                  <RecentFoot>See all recent chats</RecentFoot>
                </Recent>
                <Personal>
                  <PersonalText>Personalization is currently off</PersonalText>
                  <TurnOn>Turn on</TurnOn>
                </Personal>
              </RightCol>
            </Body>
            <Feedback><ChatGlyph /><span>Feedback</span></Feedback>
          </Main>
          <Scroll><ArrowUp /><Thumb /><ArrowDown /></Scroll>
        </Page>
        <Sidebar>
          <SideSlot><SideMag /></SideSlot>
          <SideSlot><SideTag /></SideSlot>
          <SideSlot><SideBox /></SideSlot>
          <SideSlot><SideChess /></SideSlot>
          <SideSlot><SideOffice /></SideSlot>
          <SideSlot><SideOutlook /></SideSlot>
          <SideSlot><SidePlane /></SideSlot>
          <SideRule $m="16px 0 0" />
          <SideSlot $h={60} $mt={18}><Plus size={24} strokeWidth={1.4} /></SideSlot>
          <SideRule $m="auto 0 3px" />
          <SideSlot $h={58}><PanelIcon /></SideSlot>
          <SideSlot $h={50} $mt={6}><Settings size={27} strokeWidth={1.5} /></SideSlot>
        </Sidebar>
      </Middle>

      <Taskbar>
        <Widget><FlagWidget /><Badge $c="#ff9aa5" $left={20} $top={8}>1</Badge></Widget>
        <StartSlot><StartGrid><StartTile /><StartTile /><StartTile /><StartTile /></StartGrid></StartSlot>
        <TaskSearch>
          <Search size={24} strokeWidth={1.8} color="#e8e8e8" />
          <span>Search</span>
          <Birds><BirdsIcon /></Birds>
        </TaskSearch>
        <TaskSlot><TaskIcon><CopilotLogo id="taskcp" /><PreTag>PRE</PreTag></TaskIcon></TaskSlot>
        <TaskSlot><WindowsStack /></TaskSlot>
        <TaskSlot><WhatsApp /><Badge $left={35}>7</Badge></TaskSlot>
        <TaskSlot><TaskIcon $ml={14}><Teams /><TeamsBadge>T</TeamsBadge></TaskIcon><Badge $left={35}>1</Badge></TaskSlot>
        <TaskSlot><TaskIcon $ml={2}><Explorer /></TaskIcon></TaskSlot>
        <TaskSlot><Spotify /><TaskDot /></TaskSlot>
        <TaskSlot><TaskIcon $ml={3}><PyFile /></TaskIcon></TaskSlot>
        <TaskSlot><WordIcon><WordBadge>W</WordBadge></WordIcon></TaskSlot>
        <TaskSlot><MySql>MySQL&gt;</MySql></TaskSlot>
        <TaskSlot><Netflix /></TaskSlot>
        <TaskSlot><ActiveFrame /><TaskIcon><EdgeIcon /></TaskIcon><ActiveBar /></TaskSlot>
        <TaskSlot><Firefox /></TaskSlot>
        <Tray>
          <TrayItem $w={42}><ChevronUp size={24} strokeWidth={1.8} /></TrayItem>
          <TrayItem $w={54}><CloudIcon /></TrayItem>
          <Lang>ENG<br />IN</Lang>
          <TrayItem $w={50}><Wifi size={24} strokeWidth={1.8} /></TrayItem>
          <TrayItem $w={20}><Volume2 size={24} strokeWidth={1.5} /></TrayItem>
          <TrayItem $w={52}><Battery /></TrayItem>
          <Clock>21:38<br />14-02-2024</Clock>
          <TrayItem $w={46}><BellIcon /></TrayItem>
        </Tray>
      </Taskbar>
    </Shell>
  );
}
